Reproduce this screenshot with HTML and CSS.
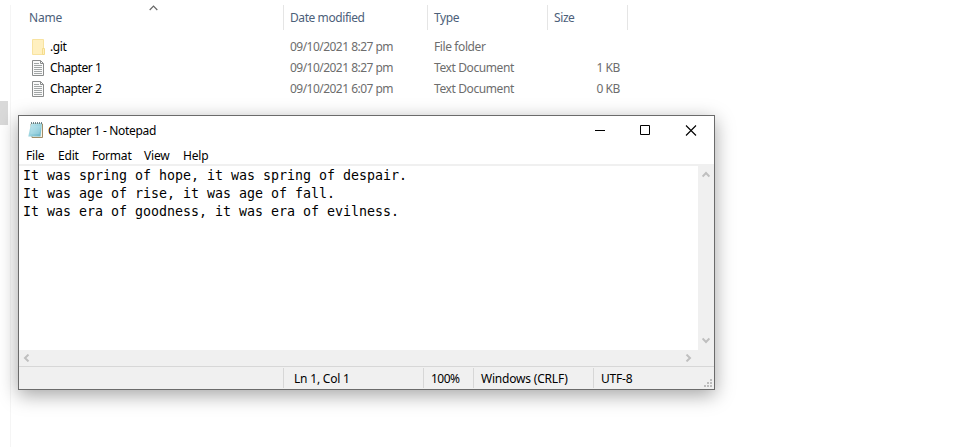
FILE: index.html
```html
<!DOCTYPE html>
<html lang="en">
<head>
<meta charset="utf-8">
<title>Chapter 1 - Notepad</title>
<link rel="stylesheet" href="styles.css">
</head>
<body>
<div class="desktop">
  <aside class="nav"><div class="nav-thumb"></div></aside>
  <main class="files">
    <div class="row head">
      <span class="name">Name<svg class="sort" width="9" height="6" viewBox="0 0 9 6"><path d="M.7 5 4.5 1.2 8.3 5" fill="none" stroke="#666" stroke-width="1.2"/></svg></span>
      <span class="date">Date modified</span>
      <span class="type">Type</span>
      <span class="size">Size</span>
    </div>
    <div class="row">
      <span class="name"><svg class="icon" width="14" height="16" viewBox="0 0 14 16"><path d="M.5.5h11v15H.5z" fill="#fff0c0" stroke="#f8e3a0"/><path d="M10.5 9.5h2v6h-2z" fill="#fff0c0" stroke="#f5dc8c"/></svg><span class="label">.git</span></span>
      <span class="date">09/10/2021 8:27 pm</span>
      <span class="type">File folder</span>
      <span class="size"></span>
    </div>
    <div class="row">
      <span class="name"><svg class="icon" width="14" height="16" viewBox="0 0 14 16"><path d="M.5.5h8l3 3v12H.5z" fill="#fafafa" stroke="#8a8c8c"/><path d="M8.5.5v3h3" fill="none" stroke="#8a8c8c"/><path d="M2 3.5h5M2 5.5h8M2 7.5h8M2 9.5h8M2 11.5h8M2 13.5h8" stroke="#a2a6a6"/></svg><span class="label">Chapter 1</span></span>
      <span class="date">09/10/2021 8:27 pm</span>
      <span class="type">Text Document</span>
      <span class="size">1 KB</span>
    </div>
    <div class="row">
      <span class="name"><svg class="icon" width="14" height="16" viewBox="0 0 14 16"><path d="M.5.5h8l3 3v12H.5z" fill="#fafafa" stroke="#8a8c8c"/><path d="M8.5.5v3h3" fill="none" stroke="#8a8c8c"/><path d="M2 3.5h5M2 5.5h8M2 7.5h8M2 9.5h8M2 11.5h8M2 13.5h8" stroke="#a2a6a6"/></svg><span class="label">Chapter 2</span></span>
      <span class="date">09/10/2021 6:07 pm</span>
      <span class="type">Text Document</span>
      <span class="size">0 KB</span>
    </div>
  </main>

  <section class="window">
    <header class="titlebar">
      <svg class="app-icon" width="16" height="17" viewBox="0 0 16 17"><defs><linearGradient id="pad" x1="0" y1="0" x2="1" y2="1"><stop offset="0" stop-color="#c4e8ef"/><stop offset=".5" stop-color="#9ad3df"/><stop offset="1" stop-color="#62b0c5"/></linearGradient></defs><path d="M3 2h11.500v13.500H4z" fill="#f7f3e6" stroke="#a08d68"/><path d="M3 1.500h11L12.500 14.500H.3z" fill="url(#pad)"/><path d="M3.500 5h9M3 7h9M3 9h9M2.500 11h9" stroke="#c9ebf1" stroke-width=".5"/><path d="M3 1h11" stroke="#47616a" stroke-width="1.500" stroke-dasharray="1 1"/></svg>
      <h1 class="title">Chapter 1 - Notepad</h1>
      <svg class="controls" width="102" height="11" viewBox="0 0 102 11" fill="none" stroke="#000"><path d="M0 5.500h10M45.500.5h9v9h-9z"/><path d="M91 .5l10 10M101 .5l-10 10" stroke-width="1.100"/></svg>
    </header>
    <nav class="menu"><span class="m1">File</span><span class="m2">Edit</span><span class="m3">Format</span><span class="m4">View</span><span class="m5">Help</span></nav>
    <div class="editor">
      <pre class="text">It was spring of hope, it was spring of despair.
It was age of rise, it was age of fall.
It was era of goodness, it was era of evilness.</pre>
      <div class="vscroll">
        <svg width="8" height="7" viewBox="0 0 8 7"><path d="M.6 5.500 4 2l3.400 3.500" class="arrow"/></svg>
        <svg width="8" height="7" viewBox="0 0 8 7"><path d="M.6 1.500 4 5l3.400-3.500" class="arrow"/></svg>
      </div>
    </div>
    <div class="hscroll">
      <svg width="7" height="8" viewBox="0 0 7 8"><path d="M5.500.6 2 4l3.500 3.400" class="arrow"/></svg>
      <svg width="7" height="8" viewBox="0 0 7 8"><path d="M1.500.6 5 4 1.500 7.400" class="arrow"/></svg>
    </div>
    <footer class="status">
      <span class="s0"></span><span class="s1">Ln 1, Col 1</span><span class="s2">100%</span><span class="s3">Windows (CRLF)</span><span class="s4">UTF-8</span>
      <svg class="grip" width="8" height="8" viewBox="0 0 8 8" fill="#bdbdbd"><path d="M6 0h2v2H6zM3 3h2v2H3zM6 3h2v2H6zM0 6h2v2H0zM3 6h2v2H3zM6 6h2v2H6z"/></svg>
    </footer>
  </section>
</div>
</body>
</html>
```
FILE: styles.css
```css
* { box-sizing: border-box; }
body { margin: 0; background: #fff; overflow: hidden; }
.desktop {
  position: relative;
  display: flex;
  height: 447px;
  font: 12px/16px "Noto Sans", "Open Sans", sans-serif;
  letter-spacing: -0.2px;
  color: #000;
  white-space: nowrap;
}
.nav { width: 11px; margin-top: 5px; padding-top: 96px; border-right: 1px solid #f5f5f5; }
.nav-thumb { width: 8px; height: 24px; background: #d9d9d9; }
.files { padding-top: 5px; letter-spacing: -0.4px; }
.row {
  display: grid;
  grid-template-columns: 273px 144px 120px 80px;
  height: 21px;
  align-items: center;
  color: #6d6d6d;
}
.row.head { height: 25px; margin-bottom: 6px; color: #4c607a; }
.head > span { height: 25px; padding-top: 5px; border-right: 1px solid #e5e5e5; }
.name { display: flex; align-items: center; padding-left: 21px; color: #000; }
.head .name { position: relative; align-items: flex-start; padding-left: 18px; color: #4c607a; letter-spacing: -0.2px; }
.sort { position: absolute; left: 138px; top: 0; }
.icon { margin-right: 4px; }
.date, .type { padding-left: 6px; }
.date { letter-spacing: -0.53px; }
.head .date { letter-spacing: -0.42px; }
.size { padding-right: 8px; text-align: right; }
.head .size { padding-left: 6px; text-align: left; }

.window {
  position: absolute;
  left: 18px;
  top: 115px;
  width: 697px;
  height: 275px;
  display: flex;
  flex-direction: column;
  border: 1px solid #6b6b6b;
  background: #fff;
  box-shadow: 0 5px 18px rgba(0, 0, 0, .36);
}
.titlebar { display: flex; align-items: center; height: 30px; padding: 0 17px 0 9px; }
.title { margin: 0 auto 0 4px; font-size: 12px; font-weight: 400; line-height: 16px; letter-spacing: -0.33px; }
.app-icon { margin-top: -2px; }
.controls { margin-top: -2px; }
.menu { display: flex; height: 18px; padding-left: 7px; line-height: 20px; }
.m1 { width: 32px; }
.m2 { width: 34px; }
.m3 { width: 52px; }
.m4 { width: 39px; }
.editor { display: flex; height: 186px; border-top: 2px solid #f0f0f0; }
.text { flex: 1; margin: 0; padding: 1px 4px; font: 13.3px/18px "DejaVu Sans Mono", monospace; letter-spacing: -0.007px; }
.vscroll { display: flex; flex-direction: column; justify-content: space-between; align-items: center; width: 16px; padding: 5px 0 6px; background: #f0f0f0; }
.hscroll { display: flex; justify-content: space-between; align-items: center; height: 16px; padding: 0 22px 0 4px; background: #f0f0f0; }
.arrow { fill: none; stroke: #bfbfbf; stroke-width: 2; }
.status { position: relative; display: flex; height: 23px; padding-top: 1px; border-top: 1px solid #d7d7d7; background: #f0f0f0; }
.status > span { height: 20px; padding: 3px 0 0 7px; border-right: 1px solid #d7d7d7; }
.status .s0 { width: 265px; }
.status .s1 { width: 140px; padding-left: 10px; }
.status .s2 { width: 50px; letter-spacing: -0.5px; }
.status .s3 { width: 120px; }
.status .s4 { border: 0; }
.grip { position: absolute; right: 2px; bottom: 2px; }
```
